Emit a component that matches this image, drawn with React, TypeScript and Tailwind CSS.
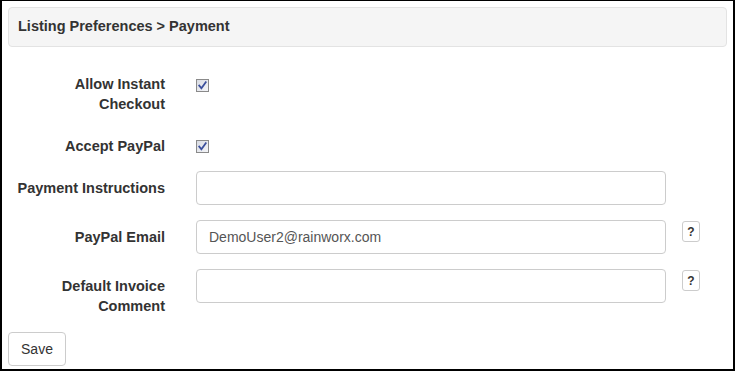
import type { ReactNode } from 'react';

function CheckMark({ className = 'mt-[5px]' }: { className?: string }) {
  return (
    <span className={`flex h-[13px] w-[13px] items-center justify-center border border-[#8a8a8a] bg-gradient-to-br from-[#d9dce3] to-[#f4f5f8] ${className}`}>
      <svg width="9" height="9" viewBox="0 0 9 9" aria-hidden="true">
        <path d="M1.2 4.6 L3.4 7.2 L7.8 1.2" fill="none" stroke="#3b4f9c" strokeWidth="1.8" strokeLinecap="square" />
      </svg>
    </span>
  );
}

function Row({ label, children, className = '', labelClass = 'pt-[7px]' }: { label: string; children: ReactNode; className?: string; labelClass?: string }) {
  return (
    <div className={`flex items-start ${className}`}>
      <div className={`w-[157px] shrink-0 pl-[9px] text-right text-[14.5px] font-bold leading-[20px] text-[#333] ${labelClass}`}>{label}</div>
      <div className="ml-[31px] flex items-start">{children}</div>
    </div>
  );
}

function TextInput({ value = '' }: { value?: string }) {
  return (
    <div className="flex h-[34px] w-[470px] items-center rounded-[4px] border border-[#ccc] bg-white px-[12px] text-[14px] text-[#555]">
      {value}
    </div>
  );
}

function HelpButton() {
  return (
    <button className="ml-[16px] mt-[1px] flex h-[21px] w-[18px] items-center justify-center rounded-[3px] border border-[#ccc] bg-white text-[12px] font-bold text-[#333]">
      ?
    </button>
  );
}

export default function App() {
  return (
    <div
      className="h-[371px] w-[735px] border-b-2 border-l-2 border-r-2 border-t border-black bg-white p-[6px]"
      style={{ fontFamily: '"Liberation Sans", Arial, sans-serif' }}
    >
      <div className="flex h-[40px] items-center rounded-[4px] border border-[#e3e3e3] bg-[#f5f5f5] px-[9px] text-[14.5px] font-bold text-[#333]">
        Listing Preferences &gt; Payment
      </div>

      <Row label="Allow Instant Checkout" className="mt-[27px]" labelClass="pt-0">
        <CheckMark />
      </Row>
      <Row label="Accept PayPal" className="mt-[22px]" labelClass="pt-0">
        <CheckMark className="mt-[4px]" />
      </Row>
      <Row label="Payment Instructions" className="mt-[15px]">
        <TextInput />
      </Row>
      <Row label="PayPal Email" className="mt-[15px]">
        <TextInput value="DemoUser2@rainworx.com" />
        <HelpButton />
      </Row>
      <Row label="Default Invoice Comment" className="mt-[15px]">
        <TextInput />
        <HelpButton />
      </Row>

      <button className="mt-[16px] h-[34px] w-[58px] rounded-[4px] border border-[#ccc] bg-white text-[14px] text-[#333]">
        Save
      </button>
    </div>
  );
}
